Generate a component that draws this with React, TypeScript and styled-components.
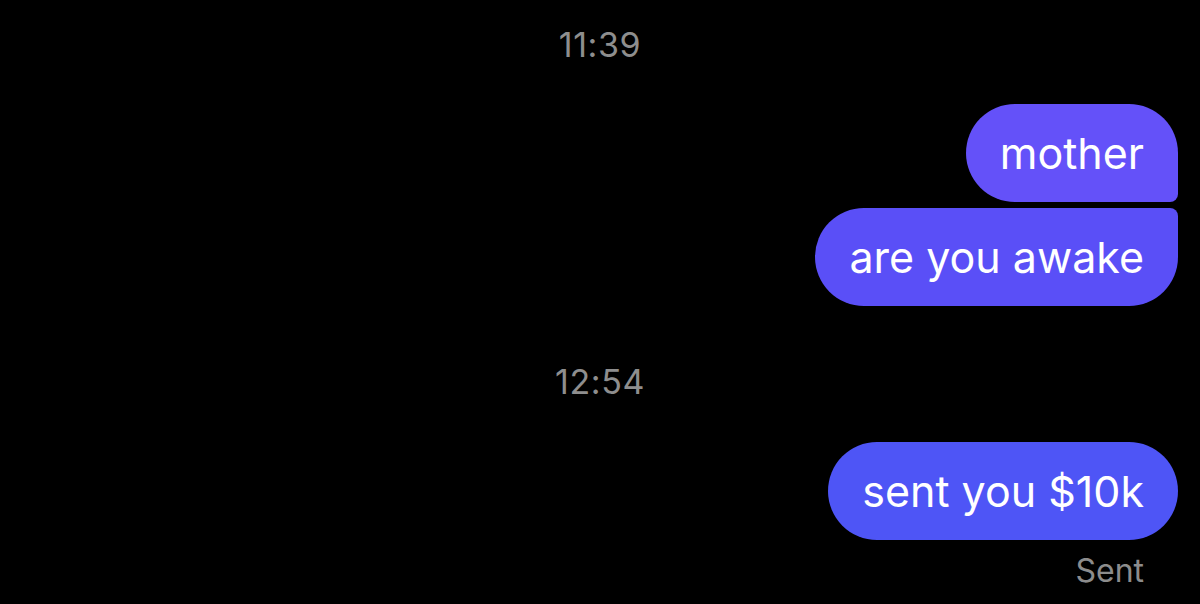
import React from "react";
import styled, { createGlobalStyle } from "styled-components";

const GlobalStyle = createGlobalStyle`
  html, body {
    margin: 0;
    padding: 0;
    background: #000;
  }
  body {
    font-family: Inter, "Noto Sans", "Liberation Sans", sans-serif;
    -webkit-font-smoothing: antialiased;
  }
`;

const Thread = styled.div`
  width: 1200px;
  height: 604px;
  overflow: hidden;
  background: #000;
  display: flex;
  flex-direction: column;
  padding: 25px 22px 0 22px;
  box-sizing: border-box;
`;

const Timestamp = styled.div<{ $before?: number; $after: number }>`
  align-self: center;
  color: #8e8e8e;
  font-size: 34px;
  line-height: 40px;
  letter-spacing: 0.6px;
  margin-top: ${({ $before = 0 }) => $before}px;
  margin-bottom: ${({ $after }) => $after}px;
`;

const Group = styled.div`
  display: flex;
  flex-direction: column;
  align-items: flex-end;
  gap: 6px;
`;

type Corner = "first" | "last" | "single";

const radii: Record<Corner, string> = {
  first: "49px 49px 8px 49px",
  last: "49px 8px 49px 49px",
  single: "49px",
};

const Bubble = styled.div<{ $pos: Corner; $bg: string }>`
  height: 98px;
  box-sizing: border-box;
  padding: 0 34px;
  display: flex;
  align-items: center;
  background: ${({ $bg }) => $bg};
  border-radius: ${({ $pos }) => radii[$pos]};
  color: #fff;
  font-size: 43px;
  white-space: nowrap;
`;

const Status = styled.div`
  align-self: flex-end;
  margin-top: 12px;
  margin-right: 34px;
  color: #8c8c8c;
  font-size: 32px;
  line-height: 38px;
`;

export default function App() {
  return (
    <>
      <GlobalStyle />
      <Thread>
        <Timestamp $after={39}>11:39</Timestamp>
        <Group>
          <Bubble $pos="first" $bg="#6451f9">mother</Bubble>
          <Bubble $pos="last" $bg="#5a4ff7">are you awake</Bubble>
        </Group>
        <Timestamp $before={56} $after={40}>
          12:54
        </Timestamp>
        <Group>
          <Bubble $pos="single" $bg="#4e55f6">sent you $10k</Bubble>
        </Group>
        <Status>Sent</Status>
      </Thread>
    </>
  );
}
